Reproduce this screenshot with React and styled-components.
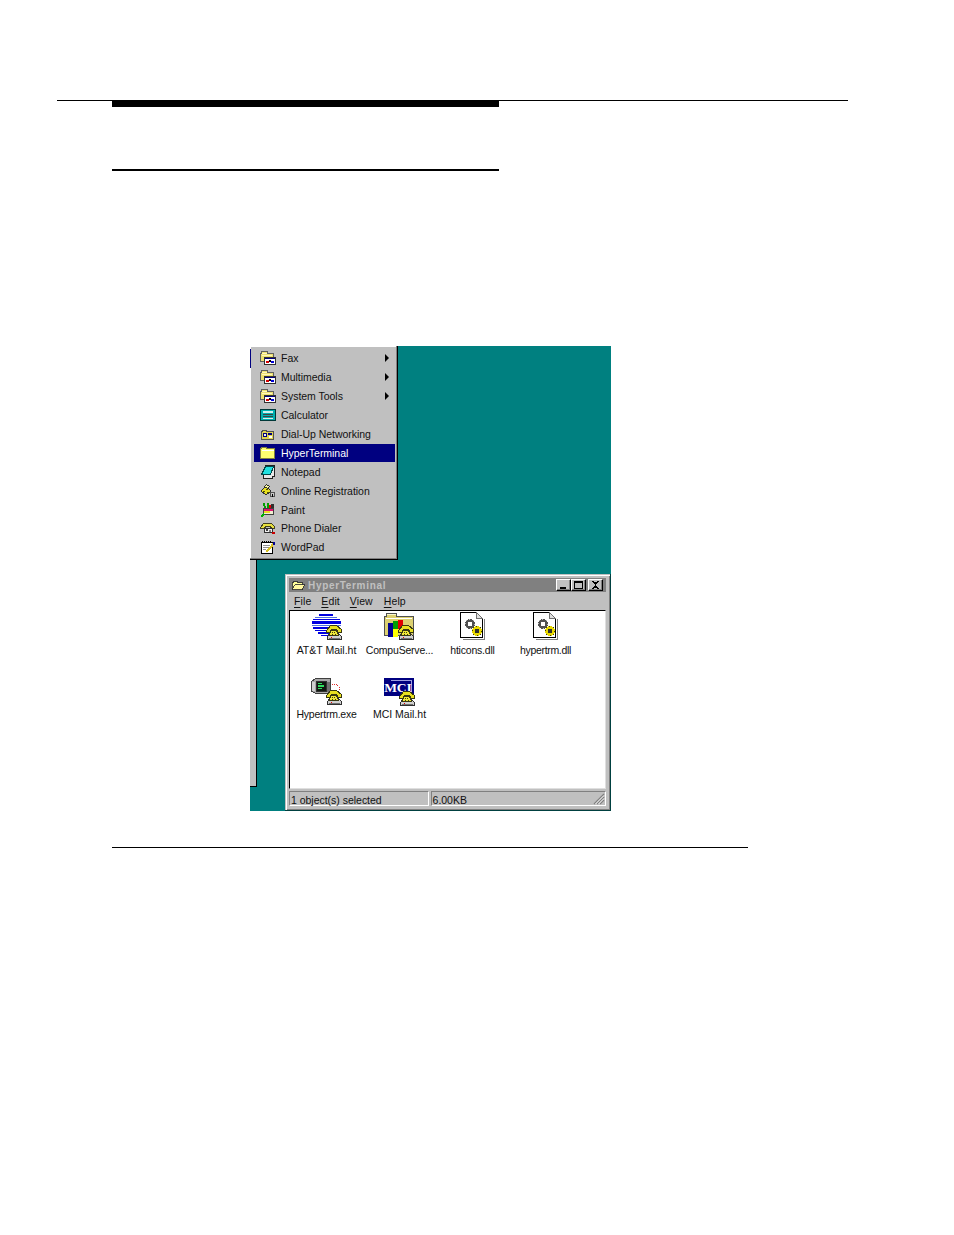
import React from "react";
import styled, { createGlobalStyle } from "styled-components";

const Global = createGlobalStyle`
  html, body { margin: 0; padding: 0; background: #fff; }
  body { font-family: "Liberation Sans", Arial, sans-serif; }
`;

const Page = styled.div`
  width: 954px;
  height: 1235px;
  padding-top: 100px;
  box-sizing: border-box;
  overflow: hidden;
`;
const TopRule = styled.div`
  position: relative;
  margin-left: 57px;
  width: 791px;
  height: 1px;
  background: #000;
`;
const ThickBar = styled.div`
  position: absolute;
  left: 55px;
  top: 0;
  width: 387px;
  height: 7px;
  background: #000;
`;
const SectionRule = styled.div`
  margin: 68px 0 0 112px;
  width: 387px;
  height: 2px;
  background: #000;
`;
const Desktop = styled.div`
  position: relative;
  margin: 175px 0 0 250px;
  width: 361px;
  height: 465px;
  background: #008080;
  overflow: hidden;
`;
const BottomRule = styled.div`
  margin: 36px 0 0 112px;
  width: 636px;
  height: 1px;
  background: #000;
`;
const BehindMenu = styled.div`
  position: absolute;
  left: 0;
  top: 200px;
  width: 6px;
  height: 240px;
  background: #c0c0c0;
  border-right: 1px solid #000;
  border-bottom: 1px solid #000;
`;
const Menu = styled.div`
  position: absolute;
  left: 0;
  top: 0;
  width: 148px;
  height: 214px;
  box-sizing: border-box;
  padding: 3px 2px 2px 4px;
  background: #c0c0c0;
  border-right: 1px solid #000;
  border-bottom: 1px solid #000;
  box-shadow: inset -1px -1px 0 #808080, inset 1px 1px 0 #fff;
`;
const MenuAccent = styled.div`
  position: absolute;
  left: 0;
  top: 3px;
  width: 1px;
  height: 19px;
  background: #000080;
`;
const MenuRow = styled.div`
  display: flex;
  align-items: center;
  box-sizing: border-box;
  height: 18.9px;
  padding-left: 6px;
  padding-bottom: ${(p) => (p.$active ? "1px" : "0")};
  border-top: ${(p) => (p.$active ? "1px solid transparent" : "0")};
  background-clip: padding-box;
  font-size: 10.5px;
  letter-spacing: -0.03px;
  white-space: nowrap;
  color: ${(p) => (p.$active ? "#fff" : "#111")};
  background-color: ${(p) => (p.$active ? "#000080" : "transparent")};
  position: relative;
  svg { flex: none; margin-right: 5px; }
`;
const Arrow = styled.i`
  position: absolute;
  right: 6px;
  top: 5px;
  border-left: 4px solid #000;
  border-top: 4px solid transparent;
  border-bottom: 4px solid transparent;
`;
const Window = styled.div`
  position: absolute;
  left: 35px;
  top: 228px;
  width: 326px;
  height: 237px;
  box-sizing: border-box;
  padding: 4px 4px 3px 4px;
  display: flex;
  flex-direction: column;
  background: #c0c0c0;
  border-right: 1px solid #004040;
  border-bottom: 1px solid #004040;
  box-shadow: inset 1px 1px 0 #c0c0c0, inset 2px 2px 0 #fff, inset -1px -1px 0 #808080;
`;
const TitleBar = styled.div`
  display: flex;
  align-items: center;
  height: 14px;
  padding: 0 3px 0 2px;
  background: #808080;
  color: #c0c0c0;
  font-size: 10px;
  font-weight: 700;
  letter-spacing: 0.68px;
  svg { margin-right: 3px; flex: none; }
`;
const TitleText = styled.span`
  flex: 1;
`;
const WinButton = styled.div`
  width: 15px;
  height: 12px;
  margin-left: ${(p) => (p.$gap ? "2px" : "0")};
  background: #c0c0c0;
  box-sizing: border-box;
  border-top: 1px solid #fff;
  border-left: 1px solid #fff;
  border-right: 1px solid #000;
  border-bottom: 1px solid #000;
  box-shadow: inset -1px -1px 0 #808080;
  display: flex;
  align-items: center;
  justify-content: center;
  svg { margin: 0; }
`;
const MenuBar = styled.div`
  display: flex;
  align-items: center;
  height: 18px;
  padding-left: 5px;
  gap: 10px;
  font-size: 10.5px;
  color: #111;
  letter-spacing: 0.1px;
  flex: none;
`;
const MenuItem = styled.span`
  margin-left: ${(p) => (p.$extra ? "1px" : "0")};
  u { text-decoration-thickness: 1px; text-underline-offset: 2px; }
`;
const Client = styled.div`
  flex: none;
  height: 179px;
  box-sizing: border-box;
  background: #fff;
  border-top: 1px solid #000;
  border-left: 1px solid #000;
  border-right: 1px solid #dfdfdf;
  border-bottom: 1px solid #dfdfdf;
  padding-top: 1px;
  display: grid;
  grid-template-columns: repeat(4, 73px);
  grid-auto-rows: 64px;
`;
const FileItem = styled.div`
  display: flex;
  flex-direction: column;
  align-items: center;
  font-size: 10.5px;
  color: #111;
  white-space: nowrap;
`;
const FileLabel = styled.span`
  line-height: 12px;
  letter-spacing: ${(p) => p.$track || 0}px;
`;
const StatusBar = styled.div`
  display: flex;
  flex: none;
  gap: 2px;
  margin-top: 2px;
  height: 15px;
  font-size: 10.5px;
  color: #111;
  letter-spacing: -0.02px;
`;
const StatusPanel = styled.div`
  position: relative;
  box-sizing: border-box;
  width: ${(p) => p.$w}px;
  padding-left: 1px;
  line-height: 16px;
  border-top: 1px solid #808080;
  border-left: 1px solid #808080;
  border-right: 1px solid #fff;
  border-bottom: 1px solid #fff;
`;
const Grip = styled.svg`
  position: absolute;
  right: 0;
  bottom: 0;
`;

/* ---------- small (16px) menu icons ---------- */
const Ico = ({ children, s = 16, vb = 16 }) => (
  <svg width={s} height={s} viewBox={`0 0 ${vb} ${vb}`} shapeRendering="crispEdges" aria-hidden="true">
    {children}
  </svg>
);
const ProgramFolder = () => (
  <Ico>
    <path d="M0.500 3.500h1v-2h6v2h6v8h-13z" fill="#ece070" stroke="#606060" />
    <rect x="2" y="3" width="5" height="1" fill="#fff8c0" />
    <rect x="2" y="5" width="10" height="1" fill="#fff8c0" />
    <rect x="4.500" y="7.500" width="11" height="7" fill="#fff" stroke="#303030" />
    <rect x="5" y="8" width="10" height="1" fill="#000080" />
    <rect x="6" y="11" width="3" height="2" fill="#d80000" />
    <rect x="9" y="10" width="2" height="2" fill="#000000" />
    <rect x="11" y="11" width="3" height="2" fill="#0000d8" />
  </Ico>
);
const CalcIcon = () => (
  <Ico>
    <rect x="0.500" y="2.500" width="15" height="11" fill="#00b0b0" stroke="#003838" />
    <rect x="3" y="4" width="10" height="2" fill="#d0f0f0" />
    <rect x="3" y="7" width="10" height="1" fill="#404040" />
    <rect x="3" y="9" width="10" height="1" fill="#404040" />
    <rect x="3" y="11" width="10" height="1" fill="#e8e8e8" />
  </Ico>
);
const DialIcon = () => (
  <Ico>
    <path d="M1.500 5.500h1v-1h4v1h7v8h-12z" fill="#e0d450" stroke="#505050" />
    <rect x="3" y="7" width="4" height="4" fill="#000080" />
    <rect x="8" y="7" width="4" height="2" fill="#000080" />
    <rect x="9" y="10" width="3" height="2" fill="#fff" />
    <rect x="4" y="8" width="2" height="2" fill="#f0f0f0" />
  </Ico>
);
const PlainFolder = () => (
  <Ico>
    <path d="M0.500 3.500h1v-1h5v1h8v10h-14z" fill="#ffff70" stroke="#808040" />
    <rect x="2" y="5" width="12" height="1" fill="#fff" />
  </Ico>
);
const NotepadIcon = () => (
  <Ico>
    <path d="M5.500 1.500h9v11h-2v2h-9v-2z" fill="#e8e8e8" stroke="#202020" />
    <path d="M5.500 2.500h8l-3 8h-9z" fill="#20e0e0" stroke="#004848" />
  </Ico>
);
const KeyIcon = () => (
  <Ico>
    <path d="M1 8l5-5 5 5-5 4z" fill="#e8e020" stroke="#303030" />
    <path d="M6.500 1.500l3 2-2 2-3-2z" fill="#f8f8a0" stroke="#303030" />
    <path d="M3 8h2v1H3zM6 6h2v1H6zM7 9h2v1H7z" fill="#505000" />
    <path d="M10.500 9.500h4v4h-4z" fill="#c8c8c8" stroke="#505050" />
    <rect x="12" y="11" width="1" height="3" fill="#000" />
  </Ico>
);
const PaintIcon = () => (
  <Ico>
    <path d="M3.500 6.500h10v6h-10z" fill="#f0f0d0" stroke="#404040" />
    <rect x="4" y="7" width="9" height="2" fill="#e01070" />
    <rect x="4" y="9" width="6" height="2" fill="#e8e020" />
    <path d="M4 1l1 5M8 1v5" stroke="#00a000" strokeWidth="2" fill="none" />
    <path d="M1 15l3-3" stroke="#00b000" strokeWidth="2" />
    <rect x="11" y="2" width="3" height="4" fill="#303030" />
    <rect x="9" y="3" width="2" height="3" fill="#e00000" />
  </Ico>
);
const PhoneIcon = () => (
  <Ico>
    <path d="M0.500 7.500l3-4h8l3 3v2h-3l-1-2h-5l-1 2h-4z" fill="#e8e040" stroke="#404020" />
    <path d="M4.500 8.500h8v4h-8z" fill="#f0f0f0" stroke="#303030" />
    <rect x="6" y="9" width="2" height="2" fill="#404040" />
    <rect x="9" y="10" width="2" height="2" fill="#808080" />
    <rect x="12" y="12" width="3" height="2" fill="#c80000" />
  </Ico>
);
const WordPadIcon = () => (
  <Ico>
    <rect x="1.500" y="3.500" width="11" height="11" fill="#fff" stroke="#000" />
    <path d="M2 2h10" stroke="#000" strokeDasharray="1 1" />
    <rect x="3" y="6" width="7" height="1" fill="#909090" />
    <rect x="3" y="8" width="6" height="1" fill="#909090" />
    <rect x="3" y="10" width="3" height="1" fill="#909090" />
    <path d="M13 4l-1 3-6 6" stroke="#d8c020" strokeWidth="2" fill="none" />
    <rect x="13" y="3" width="2" height="3" fill="#000090" />
  </Ico>
);
const TitleFolder = () => (
  <Ico s={14} vb={16}>
    <path d="M1.500 5.500h1v-1h5v1h6v8h-12z" fill="#ffff99" stroke="#303030" />
    <path d="M4.500 7.500h11l-3 6h-11z" fill="#fff8a0" stroke="#303030" />
  </Ico>
);

/* ---------- large (32px) file icons ---------- */
const Handset = ({ x, y }) => (
  <g transform={`translate(${x} ${y})`}>
    <path d="M3.500 9.500h9l3 3v3h-14v-3z" fill="#d0d0d0" stroke="#303030" />
    <rect x="3" y="14" width="11" height="1" fill="#707070" />
    <rect x="5" y="13" width="1" height="1" fill="#e00000" />
    <path d="M0.500 6.500l4-5h6l5 4v3h-3l-2-3h-5l-2 3h-3z" fill="#e8e020" stroke="#383810" />
    <path d="M4.500 6.500h6l2 5h-9z" fill="#f0e838" stroke="#383810" />
    <path d="M6 8h1v1H6zM8 8h1v1H8zM6 10h1v1H6zM9 10h1v1H9z" fill="#404010" />
  </g>
);
const Big = ({ children }) => (
  <svg width="32" height="32" viewBox="0 0 32 32" shapeRendering="crispEdges" aria-hidden="true">
    {children}
  </svg>
);
const AttIcon = () => (
  <Big>
    <g fill="#0000e0">
      <rect x="8" y="2" width="14" height="2" />
      <rect x="4" y="5" width="22" height="1" fill="#5070e0" />
      <rect x="2" y="7" width="27" height="1" />
      <rect x="1" y="9" width="29" height="3" />
      <rect x="1" y="13" width="29" height="1" fill="#5070e0" />
      <rect x="2" y="15" width="27" height="2" />
      <rect x="4" y="18" width="20" height="1" />
      <rect x="7" y="20" width="14" height="2" />
      <rect x="10" y="23" width="7" height="1" />
    </g>
    <Handset x={15} y={12} />
  </Big>
);
const CompuIcon = () => (
  <Big>
    <path d="M0.500 4.500h2v-3h10v3h17v19h-29z" fill="#dcd070" stroke="#505050" />
    <rect x="3" y="2" width="9" height="1" fill="#f8f8d0" />
    <rect x="2" y="6" width="26" height="1" fill="#fff" />
    <rect x="4" y="11" width="5" height="14" fill="#000090" />
    <rect x="9" y="9" width="5" height="8" fill="#00a000" />
    <rect x="9" y="17" width="5" height="8" fill="#ffff00" />
    <rect x="14" y="8" width="5" height="9" fill="#e00000" />
    <Handset x={14} y={12} />
  </Big>
);
const Gear = ({ x, y, body, hub, corner }) => (
  <g transform={`translate(${x} ${y})`}>
    <g fill={body}>
      <rect x="1" y="1" width="8" height="8" />
      <rect x="0" y="3" width="10" height="4" />
      <rect x="3" y="0" width="4" height="10" />
    </g>
    <rect x="3" y="3" width="4" height="4" fill={hub} />
    <path d="M1 1h1v1H1zM8 1h1v1H8zM1 8h1v1H1zM8 8h1v1H8zM4 0h1v1H4zM0 4h1v1H0zM9 5h1v1H9zM5 9h1v1H5z" fill={corner} />
  </g>
);
const DllIcon = () => (
  <Big>
    <path d="M3.500 0.500h16l6 6v19h-22z" fill="#fff" stroke="#000" />
    <path d="M19.500 0.500v6h6z" fill="#e0e0e0" stroke="#707070" />
    <path d="M27.500 7v20.500H6" fill="none" stroke="#808080" />
    <Gear x={8} y={7} body="#505050" hub="#fff" corner="#c0c0c0" />
    <Gear x={15} y={14} body="#e8d800" hub="#303030" corner="#404000" />
  </Big>
);
const TermIcon = () => (
  <Big>
    <path d="M0.500 5.500l4-3h15v15h-14l-5-2z" fill="#a8a8a8" stroke="#404040" />
    <rect x="1" y="6" width="3" height="9" fill="#d0d0d0" />
    <rect x="5.500" y="5.500" width="10" height="10" fill="#101810" stroke="#303030" />
    <g fill="#30e060">
      <rect x="7" y="7" width="4" height="1" />
      <rect x="7" y="9" width="6" height="2" />
      <rect x="7" y="12" width="4" height="1" />
    </g>
    <rect x="16" y="6" width="3" height="10" fill="#707070" />
    <path d="M21 8h4l3 3v3" fill="none" stroke="#e03030" strokeDasharray="1 1" />
    <Handset x={15} y={13} />
  </Big>
);
const McitIcon = () => (
  <Big>
    <rect x="0" y="2" width="30" height="18" fill="#000080" />
    <path d="M7 4.500h20v13" fill="none" stroke="#a0a0e0" />
    <text x="14" y="16" textAnchor="middle" fontFamily="'Liberation Serif', serif" fontWeight="700" fontSize="13.500" fill="#fff">MCI</text>
    <Handset x={15} y={14} />
  </Big>
);

const Close = () => (
  <svg width="9" height="8" viewBox="0 0 9 8" shapeRendering="crispEdges"><path d="M1 0h2v1h3V0h2v1H7v1H6v1H5v2h1v1h1v1h1v1H6V7H3v1H1V7h1V6h1V5h1V3H3V2H2V1H1z" fill="#000" /></svg>
);
const Maxi = () => (
  <svg width="9" height="8" viewBox="0 0 9 8" shapeRendering="crispEdges"><path d="M0.500 1.500h8v6h-8zM0 0.500h9" fill="none" stroke="#000" /></svg>
);
const Mini = () => (
  <svg width="9" height="8" viewBox="0 0 9 8" shapeRendering="crispEdges"><rect x="1" y="6" width="6" height="2" fill="#000" /></svg>
);

const menuItems = [
  ["Fax", ProgramFolder, true],
  ["Multimedia", ProgramFolder, true],
  ["System Tools", ProgramFolder, true],
  ["Calculator", CalcIcon],
  ["Dial-Up Networking", DialIcon],
  ["HyperTerminal", PlainFolder, false, true],
  ["Notepad", NotepadIcon],
  ["Online Registration", KeyIcon],
  ["Paint", PaintIcon],
  ["Phone Dialer", PhoneIcon],
  ["WordPad", WordPadIcon],
];
const files = [
  ["AT&T Mail.ht", AttIcon, 0],
  ["CompuServe...", CompuIcon, -0.2],
  ["hticons.dll", DllIcon, -0.2],
  ["hypertrm.dll", DllIcon, -0.33],
  ["Hypertrm.exe", TermIcon, -0.25],
  ["MCI Mail.ht", McitIcon, 0],
];

export default function App() {
  return (
    <>
      <Global />
      <Page>
        <TopRule>
          <ThickBar />
        </TopRule>
        <SectionRule />
        <Desktop>
          <BehindMenu />
          <Menu>
            <MenuAccent />
            {menuItems.map(([label, Icon, sub, active]) => (
              <MenuRow key={label} $active={active}>
                <Icon />
                {label}
                {sub && <Arrow />}
              </MenuRow>
            ))}
          </Menu>
          <Window>
            <TitleBar>
              <TitleFolder />
              <TitleText>HyperTerminal</TitleText>
              <WinButton><Mini /></WinButton>
              <WinButton><Maxi /></WinButton>
              <WinButton $gap><Close /></WinButton>
            </TitleBar>
            <MenuBar>
              <MenuItem><u>F</u>ile</MenuItem>
              <MenuItem><u>E</u>dit</MenuItem>
              <MenuItem><u>V</u>iew</MenuItem>
              <MenuItem $extra><u>H</u>elp</MenuItem>
            </MenuBar>
            <Client>
              {files.map(([label, Icon, track]) => (
                <FileItem key={label}>
                  <Icon />
                  <FileLabel $track={track}>{label}</FileLabel>
                </FileItem>
              ))}
            </Client>
            <StatusBar>
              <StatusPanel $w={140}>1 object(s) selected</StatusPanel>
              <StatusPanel $w={176}>
                6.00KB
                <Grip width="12" height="12" viewBox="0 0 12 12" shapeRendering="geometricPrecision">
                  <path d="M11 1L1 11M11 4L4 11M11 7L7 11" stroke="#808080" strokeWidth="1.200" />
                  <path d="M11 2.500L2.500 11M11 5.500L5.500 11" stroke="#fff" strokeWidth="0.800" />
                </Grip>
              </StatusPanel>
            </StatusBar>
          </Window>
        </Desktop>
        <BottomRule />
      </Page>
    </>
  );
}
